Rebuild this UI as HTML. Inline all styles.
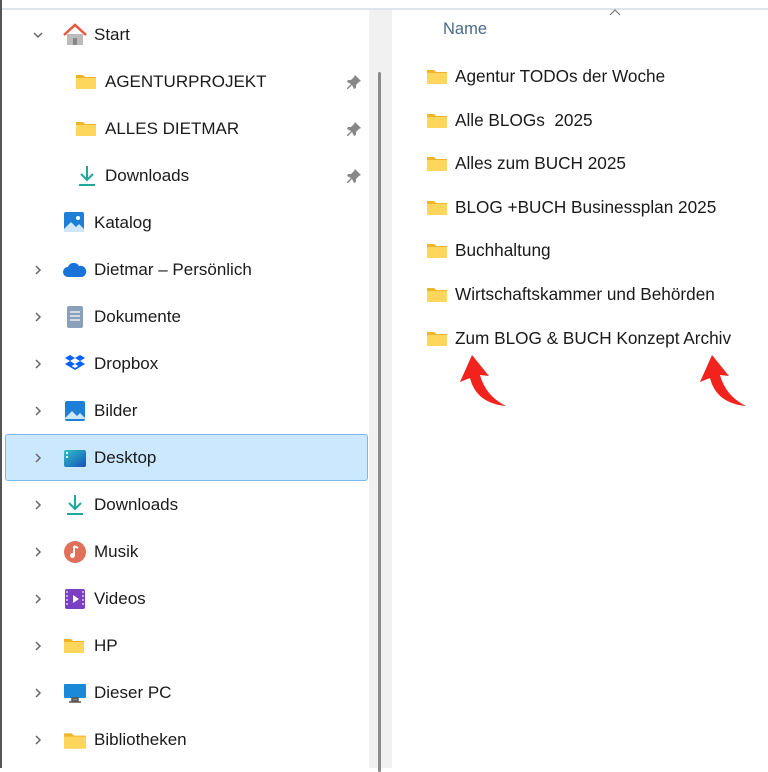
<!DOCTYPE html>
<html><head><meta charset="utf-8"><style>
*{margin:0;padding:0;box-sizing:border-box}
body{width:768px;height:768px;overflow:hidden;background:#fff;font-family:"Liberation Sans",sans-serif;color:#1a1a1a;position:relative}
.topline{position:absolute;left:0;top:8px;width:768px;height:2px;background:#dde4ec}
.lb{position:absolute;left:0;top:0;width:2px;height:768px;background:#555}
.sb{position:absolute;left:369px;top:10px;width:23px;height:758px;background:#f1f1f1}
.thumb{position:absolute;left:378px;top:72px;width:3px;height:700px;background:#8a8a8a;border-radius:2px}
.row{position:absolute;left:0;height:47px;width:370px;font-size:17px;display:flex;align-items:center}
.row .t{position:absolute;left:94px}
.row.sub .t{left:105px}
.chev{position:absolute;left:33px;width:10px;height:10px}
.ic{position:absolute;left:63px;width:24px;height:24px}
.row.sub .ic{left:75px}
.pin{position:absolute;left:346px;width:16px;height:16px}
.sel{position:absolute;left:5px;top:434px;width:363px;height:47px;background:#cce8ff;border:1px solid #7ab8ee;border-radius:3px}
.fr{position:absolute;left:426px;height:24px;font-size:17.2px;display:flex;align-items:center}
.fr span{margin-left:7px}
.fold{width:22px;height:17px}
</style></head><body>
<div class="topline"></div>
<div class="lb"></div>
<div class="sb"></div>
<div class="thumb"></div>
<div class="sel"></div>

<svg width="0" height="0" style="position:absolute"><defs>
<symbol id="f" viewBox="0 0 22 17"><path d="M1 2h7l2 2h11v12H1z" fill="#f0b429"/><path d="M1 5h20v11H1z" fill="#ffd65c"/></symbol>
<symbol id="c" viewBox="0 0 10 10"><path d="M3 1l4 4-4 4" fill="none" stroke="#666" stroke-width="1.5"/></symbol>
<symbol id="p" viewBox="0 0 16 16"><path d="M9 1l6 6-2 1-3 3 0 3-2 1-2-4-4 4-1 0 0-1 4-4-4-2 1-2 3 0 3-3z" fill="#888"/></symbol>
<symbol id="d" viewBox="0 0 24 24"><path d="M12 2v14M6 10l6 6 6-6" fill="none" stroke="#1fa99a" stroke-width="2"/><path d="M4 21h16" stroke="#1fa99a" stroke-width="2"/></symbol>
</defs></svg>

<div class="row" style="top:11px"><svg class="chev" viewBox="0 0 10 10" style="transform:rotate(90deg)"><use href="#c"/></svg>
<svg class="ic" viewBox="0 0 24 24"><path d="M4 11v11h16V11" fill="#bbb"/><path d="M10 22v-7h4v7" fill="#888"/><path d="M1 12L12 2l11 10" fill="none" stroke="#e8583e" stroke-width="2.5"/></svg><span class="t">Start</span></div>
<div class="row sub" style="top:58px"><svg class="ic fold" style="top:15px"><use href="#f"/></svg><span class="t">AGENTURPROJEKT</span><svg class="pin"><use href="#p"/></svg></div>
<div class="row sub" style="top:105px"><svg class="ic fold" style="top:15px"><use href="#f"/></svg><span class="t">ALLES DIETMAR</span><svg class="pin"><use href="#p"/></svg></div>
<div class="row sub" style="top:152px"><svg class="ic"><use href="#d"/></svg><span class="t">Downloads</span><svg class="pin"><use href="#p"/></svg></div>
<div class="row" style="top:199px"><svg class="ic" viewBox="0 0 24 24"><rect x="1" y="1" width="20" height="20" rx="2" fill="#1e7fd6"/><path d="M1 18l7-7 5 5 3-3 5 5v3H1z" fill="#cfe6fb"/><circle cx="15" cy="7" r="2" fill="#fff"/></svg><span class="t">Katalog</span></div>
<div class="row" style="top:246px"><svg class="chev"><use href="#c"/></svg><svg class="ic" viewBox="0 0 24 24"><path d="M5 19a5 5 0 010-10 6 6 0 0111-1 5 5 0 013 11z" fill="#1a73d9"/></svg><span class="t">Dietmar – Persönlich</span></div>
<div class="row" style="top:293px"><svg class="chev"><use href="#c"/></svg><svg class="ic" viewBox="0 0 24 24"><rect x="4" y="1" width="16" height="22" rx="2" fill="#8aa0b8"/><path d="M7 7h10M7 11h10M7 15h10" stroke="#e8eef4" stroke-width="1.5"/></svg><span class="t">Dokumente</span></div>
<div class="row" style="top:340px"><svg class="chev"><use href="#c"/></svg><svg class="ic" viewBox="0 0 24 24"><path d="M7 3l5 3-5 3-5-3zM17 3l5 3-5 3-5-3zM7 9l5 3-5 3-5-3zM17 9l5 3-5 3-5-3zM12 16l5-3 0 2-5 3-5-3 0-2z" fill="#0061fe"/></svg><span class="t">Dropbox</span></div>
<div class="row" style="top:387px"><svg class="chev"><use href="#c"/></svg><svg class="ic" viewBox="0 0 24 24"><rect x="2" y="2" width="20" height="20" rx="2" fill="#1e7fd6"/><path d="M2 19l7-7 5 5 3-3 5 5v1H2z" fill="#cfe6fb"/></svg><span class="t">Bilder</span></div>
<div class="row" style="top:434px"><svg class="chev"><use href="#c"/></svg><svg class="ic" viewBox="0 0 24 24"><defs><linearGradient id="g" x1="0" y1="0" x2="1" y2="1"><stop offset="0" stop-color="#2bc3c8"/><stop offset="1" stop-color="#1a4fb8"/></linearGradient></defs><rect x="1" y="4" width="22" height="17" rx="2" fill="url(#g)"/><rect x="3" y="6" width="2" height="2" fill="#fff"/><rect x="3" y="10" width="2" height="2" fill="#fff"/></svg><span class="t">Desktop</span></div>
<div class="row" style="top:481px"><svg class="chev"><use href="#c"/></svg><svg class="ic"><use href="#d"/></svg><span class="t">Downloads</span></div>
<div class="row" style="top:528px"><svg class="chev"><use href="#c"/></svg><svg class="ic" viewBox="0 0 24 24"><circle cx="12" cy="12" r="11" fill="#e0705a"/><path d="M11 6v9" stroke="#fff" stroke-width="2"/><circle cx="9.5" cy="15.5" r="2.5" fill="#fff"/><path d="M11 6l4 2" stroke="#fff" stroke-width="2"/></svg><span class="t">Musik</span></div>
<div class="row" style="top:575px"><svg class="chev"><use href="#c"/></svg><svg class="ic" viewBox="0 0 24 24"><rect x="2" y="2" width="20" height="20" rx="2" fill="#7b3fc4"/><path d="M10 8v8l6-4z" fill="#fff"/><path d="M4 4v16M20 4v16" stroke="#c9a8f0" stroke-width="2" stroke-dasharray="2 2"/></svg><span class="t">Videos</span></div>
<div class="row" style="top:622px"><svg class="chev"><use href="#c"/></svg><svg class="ic fold" style="top:15px"><use href="#f"/></svg><span class="t">HP</span></div>
<div class="row" style="top:669px"><svg class="chev"><use href="#c"/></svg><svg class="ic" viewBox="0 0 24 24"><rect x="1" y="3" width="22" height="14" rx="1" fill="#1a8ad8"/><path d="M9 17h6v3H9zM6 21h12" stroke="#555" stroke-width="1.5" fill="#888"/></svg><span class="t">Dieser PC</span></div>
<div class="row" style="top:716px"><svg class="chev"><use href="#c"/></svg><svg class="ic fold" style="top:15px;width:24px;height:19px"><use href="#f"/></svg><span class="t">Bibliotheken</span></div>

<div style="position:absolute;left:443px;top:20px;font-size:16.5px;color:#4a6a88">Name</div>
<svg style="position:absolute;left:609px;top:8px" width="12" height="8" viewBox="0 0 12 8"><path d="M1 7l5-5 5 5" fill="none" stroke="#777" stroke-width="1.2"/></svg>

<div class="fr" style="top:64px"><svg class="fold"><use href="#f"/></svg><span>Agentur TODOs der Woche</span></div>
<div class="fr" style="top:108px"><svg class="fold"><use href="#f"/></svg><span>Alle BLOGs&nbsp; 2025</span></div>
<div class="fr" style="top:151px"><svg class="fold"><use href="#f"/></svg><span>Alles zum BUCH 2025</span></div>
<div class="fr" style="top:195px"><svg class="fold"><use href="#f"/></svg><span>BLOG +BUCH Businessplan 2025</span></div>
<div class="fr" style="top:238px"><svg class="fold"><use href="#f"/></svg><span>Buchhaltung</span></div>
<div class="fr" style="top:282px"><svg class="fold"><use href="#f"/></svg><span>Wirtschaftskammer und Behörden</span></div>
<div class="fr" style="top:326px"><svg class="fold"><use href="#f"/></svg><span>Zum BLOG &amp; BUCH Konzept Archiv</span></div>

<svg style="position:absolute;left:440px;top:350px" width="320" height="60" viewBox="0 0 320 60">
<path d="M66 56C45 54 34 44 30 28l-10 4 12-27 17 21-9-1c4 14 12 24 26 31z" fill="#f2221c"/>
<path d="M306 56C285 54 274 44 270 28l-10 4 12-27 17 21-9-1c4 14 12 24 26 31z" fill="#f2221c"/>
</svg>
</body></html>
